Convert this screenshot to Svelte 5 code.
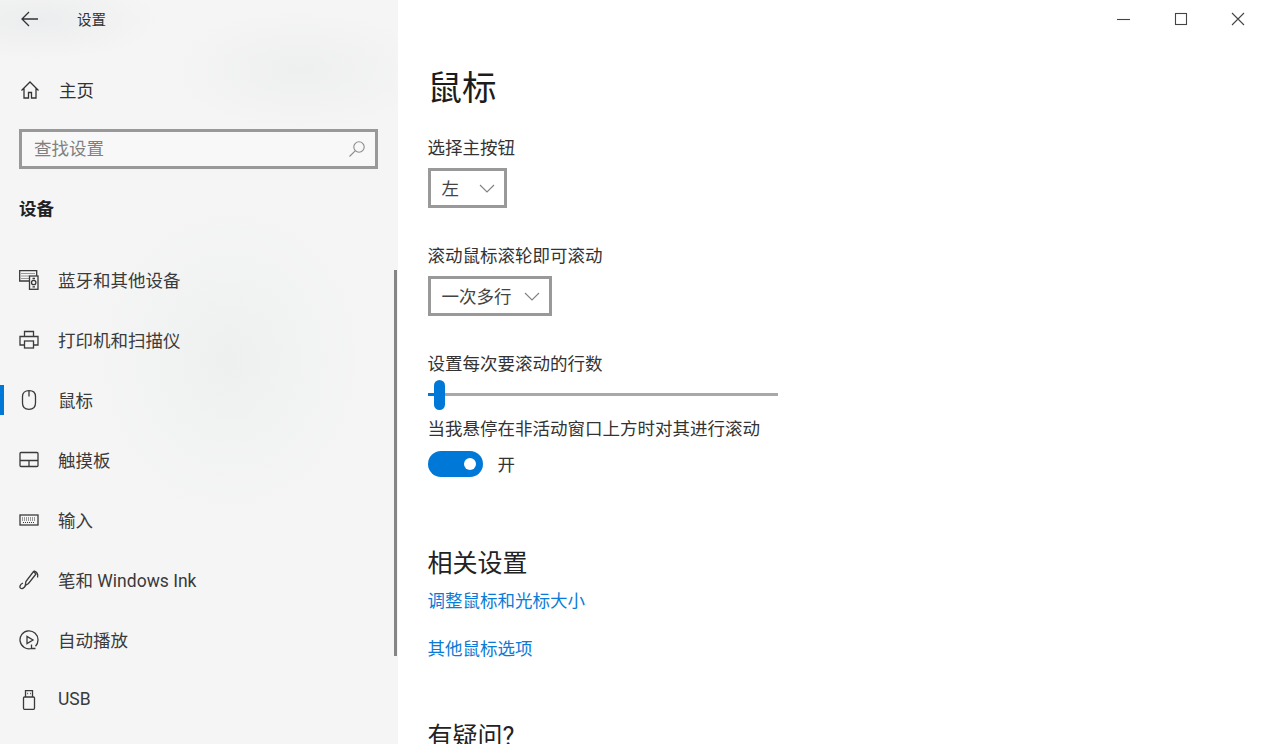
<script>
  const navItems = [
    { label: "蓝牙和其他设备", icon: "bluetooth" },
    { label: "打印机和扫描仪", icon: "printer" },
    { label: "鼠标", icon: "mouse", active: true },
    { label: "触摸板", icon: "touchpad" },
    { label: "输入", icon: "keyboard" },
    { label: "笔和 Windows Ink", icon: "pen" },
    { label: "自动播放", icon: "autoplay" },
    { label: "USB", icon: "usb" }
  ];
</script>

<div class="window">
  <aside class="sidebar">
    <div class="titlebar">
      <svg class="back" width="18" height="16" viewBox="0 0 18 16"><path d="M8 1 1 8l7 7M1 8h16" /></svg>
      <span class="app-title">设置</span>
    </div>

    <div class="home">
      <svg class="icon" width="20" height="20" viewBox="0 0 20 20"><path d="M1.5 10.500 10 2l8.500 8.500M4 8.500V18h4.500v-5.500h3V18H16V8.500" /></svg>
      <span>主页</span>
    </div>

    <div class="search">
      <span>查找设置</span>
      <svg width="18" height="18" viewBox="0 0 18 18"><circle cx="11" cy="7" r="5.2" /><path d="M7.2 10.8 1.5 16.5" /></svg>
    </div>

    <h2 class="group">设备</h2>

    <nav>
      {#each navItems as item}
        <div class="nav-item" class:active={item.active}>
          <svg class="icon" width="20" height="20" viewBox="0 0 20 20">
            {#if item.icon === "bluetooth"}
              <path d="M10 11H.7V.7h17V6" />
              <path class="keys" d="M2.500 3.500h13M2.500 6h7M2.500 8.500h7" />
              <rect x="10.500" y="6" width="8.500" height="13.300" />
              <circle cx="14.700" cy="12.500" r="2.200" />
              <path d="M13.500 8.500h2.500M13.500 16.800h2.500" />
            {:else if item.icon === "printer"}
              <path d="M5.500 6V1.500h9V6M5.500 15H1V6.500h18V15h-4.500" />
              <rect x="5.500" y="11" width="9" height="7" />
            {:else if item.icon === "mouse"}
              <path d="M10 .7c-4 0-6.500 2.300-6.500 5.800v6.500c0 3.800 2.500 6.300 6.500 6.300s6.500-2.500 6.500-6.300V6.500C16.500 3 14 .7 10 .7Z" />
              <path d="M10 .7V6.500" />
            {:else if item.icon === "touchpad"}
              <rect x="1" y="2.500" width="18" height="14" rx="1" />
              <path d="M1 10.500h18M10 10.500v6" />
            {:else if item.icon === "keyboard"}
              <rect x="1" y="5" width="18" height="10" />
              <path class="keys" d="M3 8h14M3 10h14M4 12.500h12" />
            {:else if item.icon === "pen"}
              <path d="M14.500 1.500 17 4 9.500 13.500 6.300 15.500l.6-4Z" />
              <path d="M15 1c2.700.7 4.500 3 3.500 6.500" />
              <path d="M6.500 15.500c-1 2.500-3.500 3.500-4.800 2.800-1.500-.8-.8-4 2.300-5.300" />
            {:else if item.icon === "autoplay"}
              <path d="M12.500 18.500A9 9 0 1 1 19 10c0 2.500-1 4.700-2.500 6.300" />
              <path d="M8 6.500v7l6-3.500ZM12.500 14.500v4h4" />
            {:else if item.icon === "usb"}
              <rect x="4.500" y="7" width="11" height="12.300" rx="1" />
              <path d="M6.500 7V.7h7V7M8.300 3.500h.8M11 3.500h.8" />
            {/if}
          </svg>
          <span>{item.label}</span>
        </div>
      {/each}
    </nav>
    <div class="scrollbar"></div>
  </aside>

  <main>
    <div class="controls">
      <svg width="14" height="14" viewBox="0 0 14 14"><path d="M1 7.500h13" /></svg>
      <svg width="14" height="14" viewBox="0 0 14 14"><rect x="1.500" y="1.500" width="11" height="11" /></svg>
      <svg width="14" height="14" viewBox="0 0 14 14"><path d="M1 1l12 12M13 1 1 13" /></svg>
    </div>

    <h1>鼠标</h1>

    <div class="label first">选择主按钮</div>
    <div class="select left-select">
      <span>左</span>
      <svg width="16" height="9" viewBox="0 0 16 9"><path d="M1 1l7 7 7-7" /></svg>
    </div>

    <div class="label second">滚动鼠标滚轮即可滚动</div>
    <div class="select lines-select">
      <span>一次多行</span>
      <svg width="16" height="9" viewBox="0 0 16 9"><path d="M1 1l7 7 7-7" /></svg>
    </div>

    <div class="label third">设置每次要滚动的行数</div>
    <div class="slider"><div class="thumb"></div></div>

    <div class="label fourth">当我悬停在非活动窗口上方时对其进行滚动</div>
    <div class="toggle-row">
      <div class="toggle"><div class="knob"></div></div>
      <span>开</span>
    </div>

    <h3 class="related">相关设置</h3>
    <a href="#size" class="link size-link">调整鼠标和光标大小</a>
    <a href="#other" class="link other-link">其他鼠标选项</a>

    <h3 class="question">有疑问?</h3>
  </main>
</div>

<style>
  :global(body) {
    margin: 0;
    overflow: hidden;
    background: #fff;
  }

  .window {
    display: flex;
    width: 1268px;
    height: 744px;
    overflow: hidden;
    font-family: Roboto, "Noto Sans CJK SC", sans-serif;
    font-size: 17.5px;
    color: #2b2b2b;
  }

  svg {
    fill: none;
    stroke: currentColor;
    stroke-width: 1.3;
    flex: none;
  }

  .sidebar {
    position: relative;
    width: 398px;
    flex: none;
    box-sizing: border-box;
    display: flex;
    flex-direction: column;
    background:
      radial-gradient(ellipse 130px 60px at 300px 70px, #eeefef, transparent),
      radial-gradient(ellipse 140px 160px at 230px 360px, #eef0f0, transparent),
      radial-gradient(ellipse 120px 40px at 40px 20px, #ecedee, transparent),
      #f5f5f5;
  }

  .titlebar {
    height: 40px;
    display: flex;
    align-items: center;
    padding-left: 21px;
    color: #333;
  }

  .back {
    margin-top: -3px;
  }

  .app-title {
    margin-left: 38px;
    margin-bottom: 3px;
    font-size: 14.5px;
  }

  .home {
    height: 40px;
    margin-top: 30px;
    display: flex;
    align-items: center;
    gap: 19px;
    padding-left: 20px;
    color: #333;
  }

  .home span {
    margin-bottom: 2px;
  }

  .search {
    margin: 19px 20px 0 19px;
    height: 40px;
    box-sizing: border-box;
    border: 3px solid #999;
    background: #f8f8f8;
    display: flex;
    align-items: center;
    justify-content: space-between;
    padding: 0 9px 0 12px;
    color: #808080;
  }

  .search span {
    margin-bottom: 3px;
  }

  .search svg {
    color: #8c8c8c;
    stroke-width: 1.1;
  }

  .group {
    margin: 26px 0 1px 19px;
    height: 26px;
    line-height: 29px;
    font-size: 17.5px;
    font-weight: 700;
    color: #222;
  }

  nav {
    margin-top: 28px;
    display: flex;
    flex-direction: column;
  }

  .nav-item {
    position: relative;
    height: 60px;
    display: flex;
    align-items: center;
    gap: 19px;
    padding-left: 19px;
    color: #3a3a3a;
  }

  .nav-item span {
    margin-bottom: 2px;
  }

  .nav-item.active::before {
    content: "";
    position: absolute;
    left: 0;
    top: 15px;
    width: 4px;
    height: 30px;
    background: #0078d7;
  }

  .keys {
    stroke-width: 1;
    stroke-dasharray: 1 1;
  }

  .scrollbar {
    position: absolute;
    left: 394px;
    top: 270px;
    width: 3px;
    height: 386px;
    background: #858585;
  }

  main {
    position: relative;
    flex: 1;
    padding-left: 29.5px;
    background: #fff;
    color: #333;
  }

  .controls {
    position: absolute;
    top: 12px;
    right: 23px;
    display: flex;
    gap: 43.5px;
    color: #444;
  }

  .controls svg {
    stroke-width: 1.1;
  }

  h1 {
    margin: 65px 0 0;
    height: 47px;
    line-height: 47px;
    font-size: 34.5px;
    font-weight: 400;
    color: #1c1c1c;
  }

  .label {
    height: 26px;
    line-height: 29px;
  }

  .first {
    margin-top: 22px;
  }

  .second,
  .third {
    margin-top: 34px;
  }

  .select {
    margin-top: 8px;
    height: 40px;
    box-sizing: border-box;
    border: 3px solid #999;
    display: flex;
    align-items: center;
    justify-content: space-between;
    padding: 0 9px 0 11px;
    color: #444;
  }

  .select span {
    margin-bottom: 2px;
  }

  .select svg {
    color: #808080;
    stroke-width: 1.1;
  }

  .left-select {
    width: 79px;
  }

  .lines-select {
    width: 124px;
  }

  .slider {
    position: relative;
    width: 350px;
    height: 3px;
    margin-top: 17px;
    margin-bottom: 19px;
    background: #a8a8a8;
  }

  .slider::before {
    content: "";
    position: absolute;
    left: 0;
    top: 0;
    width: 6px;
    height: 3px;
    background: #0078d7;
  }

  .thumb {
    position: absolute;
    left: 6px;
    top: -13px;
    width: 11px;
    height: 30px;
    border-radius: 6px;
    background: #0078d7;
  }

  .toggle-row {
    margin-top: 10px;
    display: flex;
    align-items: center;
    gap: 15px;
    height: 26px;
  }

  .toggle-row span {
    margin-bottom: 2px;
  }

  .toggle {
    position: relative;
    width: 55px;
    height: 26px;
    border-radius: 13px;
    background: #0078d7;
  }

  .knob {
    position: absolute;
    right: 7px;
    top: 7px;
    width: 12px;
    height: 12px;
    border-radius: 50%;
    background: #fff;
  }

  h3 {
    margin: 0;
    height: 38px;
    line-height: 41px;
    font-size: 25px;
    font-weight: 400;
    color: #222;
  }

  .related {
    margin-top: 66px;
  }

  .link {
    display: block;
    height: 26px;
    line-height: 28px;
    color: #0a7cd8;
    text-decoration: none;
  }

  .size-link {
    margin-top: 6px;
  }

  .other-link {
    margin-top: 22px;
  }

  .question {
    margin-top: 55px;
  }
</style>
